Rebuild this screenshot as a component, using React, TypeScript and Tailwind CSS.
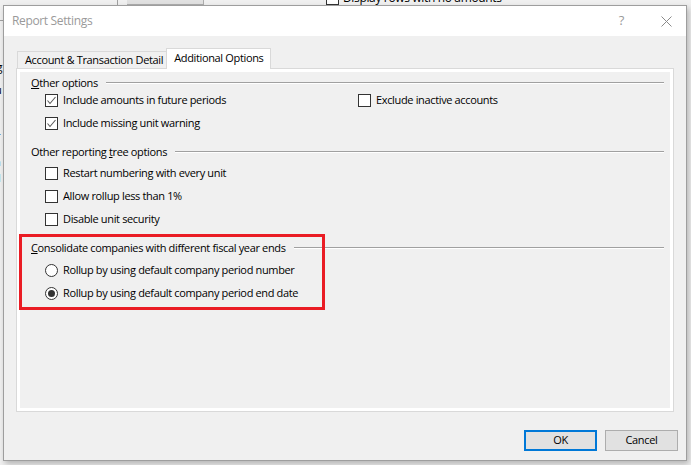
import React from "react";

const FONT = "[font-family:'Open_Sans','Noto_Sans',sans-serif]";

function CheckBox({ checked }: { checked?: boolean }) {
  return (
    <span className="relative flex h-[13px] w-[13px] shrink-0 items-center justify-center border border-[#333333] bg-white">
      {checked && (
        <svg width="11" height="11" viewBox="0 0 11 11" className="absolute left-0 top-0">
          <path d="M1.5 5.5 L4 8.5 L9.5 2" fill="none" stroke="#5a5a5a" strokeWidth="1.1" />
        </svg>
      )}
    </span>
  );
}

function Radio({ checked }: { checked?: boolean }) {
  return (
    <span className="flex h-[13px] w-[13px] shrink-0 items-center justify-center rounded-full border border-[#333333] bg-white">
      {checked && <span className="h-[7px] w-[7px] rounded-full bg-[#333333]" />}
    </span>
  );
}

function GroupHeader({ children, className = "" }: { children: React.ReactNode; className?: string }) {
  return (
    <div className={`flex h-[16px] items-center pl-[11px] ${className}`}>
      <span className="whitespace-nowrap text-black">{children}</span>
      <div className="ml-[8px] flex flex-1 flex-col">
        <div className="h-px bg-[#a0a0a0]" />
        <div className="h-px bg-white" />
      </div>
    </div>
  );
}

function Row({ children, className = "" }: { children: React.ReactNode; className?: string }) {
  return <div className={`flex h-[16px] items-center pl-[25px] ${className}`}>{children}</div>;
}

function Item({ control, label, width }: { control: React.ReactNode; label: string; width?: string }) {
  return (
    <div className={`flex items-center gap-[5px] ${width ?? ""}`}>
      {control}
      <span className="whitespace-nowrap text-black">{label}</span>
    </div>
  );
}

export default function App() {
  return (
    <div className={`relative h-[465px] w-[691px] overflow-hidden bg-[#f0f0f0] text-[11px] tracking-[-0.35px] ${FONT}`}>
      {/* Background parent window fragments */}
      <div className="absolute left-[117px] top-0 h-[6px] w-px bg-[#a0a0a0]" />
      <div className="absolute left-[127px] top-0 h-[5px] w-[77px] border-b border-r border-[#adadad] bg-[#e1e1e1]" />
      <div className="absolute left-[326px] top-[-8px] h-[13px] w-[13px] border border-[#333] bg-white" />
      <div className="absolute left-[343px] top-[-11px] whitespace-nowrap text-[12px] text-black">
        Display rows with no amounts
      </div>
      <div className="absolute left-0 top-[20px] h-px w-[4px] bg-[#a0a0a0]" />
      <div className="absolute left-[-6px] top-[61px] leading-none text-black">ig</div>
      <div className="absolute left-[-5px] top-[84px] leading-none text-black">u</div>
      <div className="absolute left-[-4px] top-[130px] leading-none text-black">r</div>
      <div className="absolute left-[-6px] top-[156px] leading-none text-black">n</div>
      <div className="absolute left-[-6px] top-[172px] leading-none text-black">d</div>

      {/* Dialog window */}
      <div className="absolute left-[3px] top-[5px] flex h-[456px] w-[684px] flex-col border border-[#9e9e9e] bg-[#f0f0f0] shadow-[2px_3px_6px_rgba(0,0,0,0.25)]">
        {/* Title bar */}
        <div className="flex h-[30px] shrink-0 items-center bg-white pl-[8px] pr-[14px]">
          <span className="text-[12px] text-[#9a9a9a]">Report Settings</span>
          <span className="ml-auto mr-[37px] text-[13px] text-[#9a9a9a]">?</span>
          <svg width="11" height="11" viewBox="0 0 11 11">
            <path d="M0.5 0.5 L10.5 10.5 M10.5 0.5 L0.5 10.5" stroke="#8a8a8a" strokeWidth="1" />
          </svg>
        </div>

        {/* Body */}
        <div className="flex flex-1 flex-col px-[12px] pt-[12px] pb-[9px]">
          {/* Tabs */}
          <div className="relative z-10 flex h-[20px] items-end pl-[1px]">
            <div className="flex h-[17px] items-center border-l border-t border-[#d9d9d9] bg-[#f0f0f0] pl-[7px] pr-[3px] text-black">
              <span className="whitespace-nowrap">Account &amp; Transaction Detail</span>
            </div>
            <div className="-mb-px flex h-[21px] items-start border-x border-t border-[#d9d9d9] bg-white px-[7px] pt-[1px] text-black">
              <span className="whitespace-nowrap">Additional Options</span>
            </div>
          </div>

          {/* Tab page */}
          <div className="h-[344px] border border-[#d9d9d9] bg-white p-[3px]">
            <div className="relative flex h-full flex-col bg-[#f0f0f0] pr-[6px] pt-[3px]">
              <GroupHeader>
                <span className="underline">O</span>ther options
              </GroupHeader>
              <Row className="mt-[1px]">
                <Item control={<CheckBox checked />} label="Include amounts in future periods" width="w-[313px]" />
                <Item control={<CheckBox />} label="Exclude inactive accounts" />
              </Row>
              <Row className="mt-[7px]">
                <Item control={<CheckBox checked />} label="Include missing unit warning" />
              </Row>

              <GroupHeader className="mt-[13px]">
                Other reporting <span className="underline">t</span>ree options
              </GroupHeader>
              <Row className="mt-[5px]">
                <Item control={<CheckBox />} label="Restart numbering with every unit" />
              </Row>
              <Row className="mt-[7px]">
                <Item control={<CheckBox />} label="Allow rollup less than 1%" />
              </Row>
              <Row className="mt-[7px]">
                <Item control={<CheckBox />} label="Disable unit security" />
              </Row>

              <GroupHeader className="mt-[13px]">
                <span className="underline">C</span>onsolidate companies with different fiscal year ends
              </GroupHeader>
              <Row className="mt-[6px]">
                <Item control={<Radio />} label="Rollup by using default company period number" />
              </Row>
              <Row className="mt-[7px]">
                <Item control={<Radio checked />} label="Rollup by using default company period end date" />
              </Row>

              {/* Red annotation box */}
              <div className="pointer-events-none absolute left-[-1px] top-[162px] h-[76px] w-[306px] border-[3px] border-[#ea1c24]" />
            </div>
          </div>

          {/* Buttons */}
          <div className="mt-auto flex justify-end gap-[8px]">
            <button className="flex h-[21px] w-[73px] items-center justify-center border-2 border-[#0078d7] bg-[#e1e1e1] text-black">
              OK
            </button>
            <button className="mr-[-4px] flex h-[21px] w-[73px] items-center justify-center border border-[#adadad] bg-[#e1e1e1] text-black">
              Cancel
            </button>
          </div>
        </div>
      </div>
    </div>
  );
}
